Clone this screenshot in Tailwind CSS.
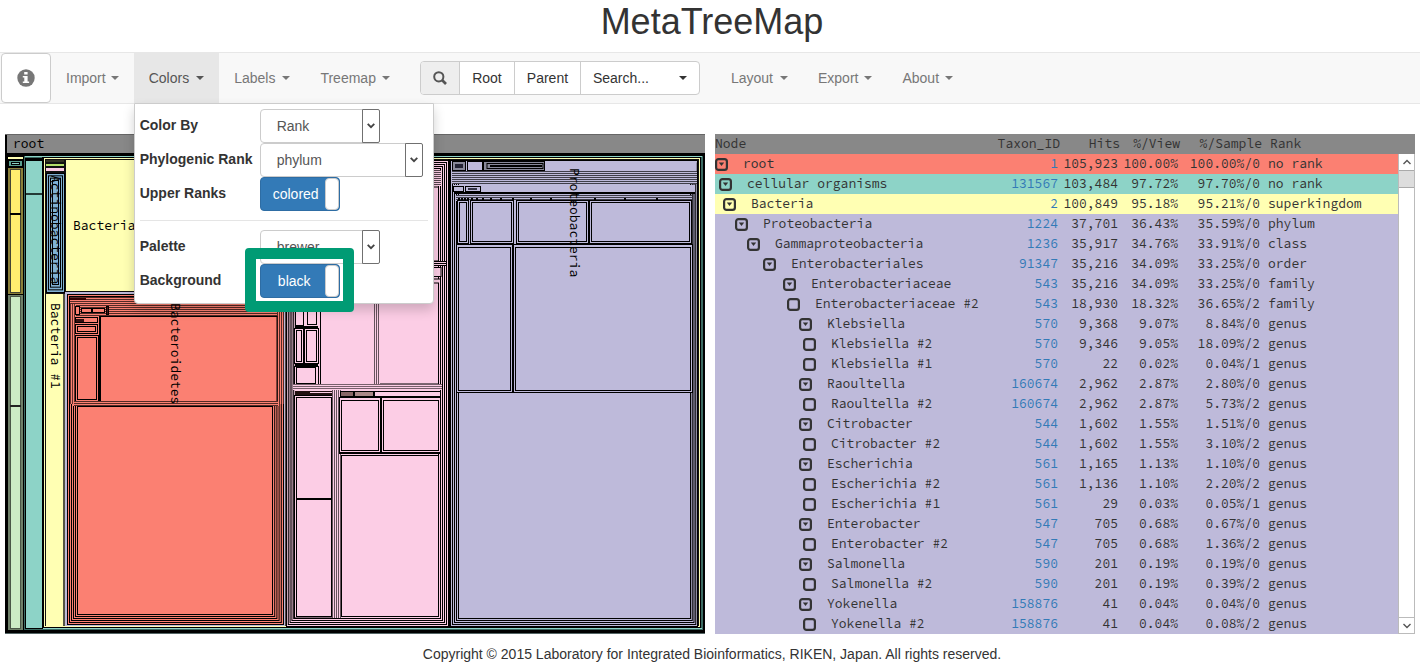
<!DOCTYPE html>
<html lang="en">
<head>
<meta charset="utf-8">
<title>MetaTreeMap</title>
<script src="https://cdn.jsdelivr.net/npm/@tailwindcss/browser@4"></script>
</head>
<body class="bg-white font-['Liberation_Sans',Arial,sans-serif] text-sm leading-5 text-[#333]">
<h1 class="h-[52px] pt-[2px] text-center text-[36px] leading-10 pl-1">MetaTreeMap</h1>

<nav class="relative flex h-[52px] items-center border-y border-[#e7e7e7] bg-[#f8f8f8] text-[#777]">
  <button aria-label="Information" class="ml-px flex h-[50px] w-[50px] items-center justify-center rounded border border-[#ccc] bg-white">
    <svg class="size-[18px]" viewBox="0 0 18 18"><circle cx="9" cy="9" r="8.7" fill="#777"/><path fill="#fff" d="M7.2 3h3.4v2.6H7.2zM5.8 7h4.8v5.4h1.5V14H5.8v-1.6h1.5V8.6H5.8z"/></svg>
  </button>
  <button class="flex h-[50px] items-center gap-[5px] px-[15px]">Import<span class="border-x-4 border-t-4 border-x-transparent border-t-[#777]"></span></button>
  <div class="relative">
    <button aria-expanded="true" class="flex h-[50px] items-center gap-[7px] bg-[#e7e7e7] px-[15px] text-[#555]">Colors<span class="border-x-4 border-t-4 border-x-transparent border-t-[#555]"></span></button>
    <div class="absolute top-[50px] left-0 z-10 w-[300px] rounded-b border border-[#ccc] bg-white px-[5px] py-[5px] shadow-[0_6px_12px_rgba(0,0,0,0.18)]">
      <div class="grid grid-cols-[120px_auto] text-[#333]">
        <label for="colorby" class="flex h-[34px] items-center pb-[3px] text-[14px] font-bold">Color By</label>
        <div class="relative w-[120px]">
          <select id="colorby" class="h-[34px] w-full appearance-none rounded border border-[#ccc] bg-white pl-4 text-[#555]"><option>Rank</option></select>
          <span class="pointer-events-none absolute inset-y-0 right-0 flex w-[18px] items-center justify-center rounded-r-xs border border-[#707070] bg-white"><svg class="h-[6px] w-2" viewBox="0 0 8 6"><path d="M.7.8 4 4.2 7.3.8" fill="none" stroke="#444" stroke-width="1.8"/></svg></span>
        </div>
        <label for="rank" class="flex h-[34px] items-center pb-[3px] font-bold whitespace-nowrap">Phylogenic Rank</label>
        <div class="relative w-[163px]">
          <select id="rank" class="h-[34px] w-full appearance-none rounded border border-[#ccc] bg-white pl-4 text-[#555]"><option>phylum</option></select>
          <span class="pointer-events-none absolute inset-y-0 right-0 flex w-[18px] items-center justify-center rounded-r-xs border border-[#707070] bg-white"><svg class="h-[6px] w-2" viewBox="0 0 8 6"><path d="M.7.8 4 4.2 7.3.8" fill="none" stroke="#444" stroke-width="1.8"/></svg></span>
        </div>
        <label for="upper" class="flex h-[34px] items-center pb-[3px] font-bold">Upper Ranks</label>
        <label class="flex h-[34px] w-20 overflow-hidden rounded border border-[#2e6da4] bg-[#337ab7] text-white">
          <input id="upper" type="checkbox" checked class="sr-only"><span class="flex flex-1 items-center justify-center pl-[6px]">colored</span><span class="w-[14px] rounded border border-[#ccc] bg-white"></span>
        </label>
      </div>
      <hr class="my-[9px] border-[#e5e5e5]">
      <div class="grid grid-cols-[120px_auto] text-[#333]">
        <label for="palette" class="flex h-[34px] items-center pb-[3px] font-bold">Palette</label>
        <div class="relative w-[120px]">
          <select id="palette" class="h-[34px] w-full appearance-none rounded border border-[#ccc] bg-white pl-4 text-[#555]"><option>brewer</option></select>
          <span class="pointer-events-none absolute inset-y-0 right-0 flex w-[18px] items-center justify-center rounded-r-xs border border-[#707070] bg-white"><svg class="h-[6px] w-2" viewBox="0 0 8 6"><path d="M.7.8 4 4.2 7.3.8" fill="none" stroke="#444" stroke-width="1.8"/></svg></span>
        </div>
        <label for="bg" class="flex h-[34px] items-center pb-[3px] font-bold">Background</label>
        <div class="relative w-20">
          <label class="flex h-[34px] w-20 overflow-hidden rounded border border-[#2e6da4] bg-[#337ab7] text-white">
            <input id="bg" type="checkbox" checked class="sr-only"><span class="flex flex-1 items-center justify-center pl-[3px]">black</span><span class="w-[14px] rounded border border-[#ccc] bg-white"></span>
          </label>
          <span class="pointer-events-none absolute -top-[16px] -right-[14px] -bottom-[14px] -left-[15px] rounded-[4px] border-[11px] border-[#009b74]"></span>
        </div>
      </div>
    </div>
  </div>
  <button class="flex h-[50px] items-center gap-[7px] px-[15px]">Labels<span class="border-x-4 border-t-4 border-x-transparent border-t-[#777]"></span></button>
  <button class="flex h-[50px] items-center gap-[6px] px-[15px]">Treemap<span class="border-x-4 border-t-4 border-x-transparent border-t-[#777]"></span></button>
  <div class="mx-[15px] flex h-[34px] w-[280px] overflow-hidden rounded border border-[#ccc] bg-white text-[#333]">
    <button aria-label="Find" class="flex w-[39px] items-center justify-center border-r border-[#ccc] bg-[#eee]"><svg class="size-[14px]" viewBox="0 0 14 14"><circle cx="5.8" cy="5.8" r="4.6" fill="none" stroke="#555" stroke-width="2"/><path d="m9 9 4 4" stroke="#555" stroke-width="2.6"/></svg></button>
    <button class="w-[55px] border-r border-[#ccc]">Root</button>
    <button class="w-[66px] border-r border-[#ccc]">Parent</button>
    <input aria-label="Search" placeholder="Search..." class="w-0 flex-1 pl-3 placeholder:text-[#333]">
    <button aria-label="Search results" class="w-9 pl-4"><span class="block w-2 border-x-4 border-t-4 border-x-transparent border-t-[#333]"></span></button>
  </div>
  <button class="ml-px flex h-[50px] items-center gap-[7px] px-[15px]">Layout<span class="border-x-4 border-t-4 border-x-transparent border-t-[#777]"></span></button>
  <button class="flex h-[50px] items-center gap-[6px] px-[15px]">Export<span class="border-x-4 border-t-4 border-x-transparent border-t-[#777]"></span></button>
  <button class="flex h-[50px] items-center gap-[6px] px-[15px]">About<span class="border-x-4 border-t-4 border-x-transparent border-t-[#777]"></span></button>
</nav>

<main class="grid grid-cols-2 gap-[10px] px-[5px] pt-[30px] font-['Source_Code_Pro','Noto_Sans_Mono_CJK_JP','Liberation_Mono',monospace] text-[13px]">
  <svg id="map" class="w-full" viewBox="5 134 700 500" role="img" aria-label="Treemap of root"></svg>
  <div class="relative">
    <table class="w-full table-fixed border-collapse leading-5">
      <colgroup><col class="w-[265px]"><col class="w-[80px]"><col class="w-[60px]"><col class="w-[60px]"><col class="w-[82px]"><col></colgroup>
      <thead class="bg-[#888]"><tr class="h-5 text-right *:p-0 *:font-normal"><th class="text-left">Node</th><th>Taxon_ID</th><th>Hits</th><th>%/View</th><th>%/Sample</th><th><span class="block pl-2 text-left">Rank</span></th></tr></thead>
      <tbody id="rows"></tbody>
    </table>
    <div class="absolute top-5 right-0 bottom-0 flex w-[17px] flex-col border-x border-[#bbb] bg-white">
      <div class="flex h-4 items-center justify-center"><svg class="h-[6px] w-2" viewBox="0 0 8 6"><path d="M.5 5 4 1.5 7.5 5" fill="none" stroke="#555" stroke-width="1.4"/></svg></div>
      <div class="h-[18px] border-y border-[#aaa] bg-[#ddd]"></div>
      <div class="flex-1"></div>
      <div class="flex h-[17px] items-center justify-center border-y border-[#bbb]"><svg class="h-[6px] w-2" viewBox="0 0 8 6"><path d="M.5 1 4 4.5 7.5 1" fill="none" stroke="#555" stroke-width="1.4"/></svg></div>
    </div>
  </div>
</main>
<footer class="py-[10px] pl-1 text-center">Copyright © 2015 Laboratory for Integrated Bioinformatics, RIKEN, Japan. All rights reserved.</footer>

<script>
const data = [
[0,1,'root','1','105,923','100.00%','100.00%/0','no rank','#fb8072'],
[4,1,'cellular organisms','131567','103,484','97.72%','97.70%/0','no rank','#8dd3c7'],
[8,1,'Bacteria','2','100,849','95.18%','95.21%/0','superkingdom','#ffffb3'],
[20,1,'Proteobacteria','1224','37,701','36.43%','35.59%/0','phylum'],
[32,1,'Gammaproteobacteria','1236','35,917','34.76%','33.91%/0','class'],
[48,1,'Enterobacteriales','91347','35,216','34.09%','33.25%/0','order'],
[68,1,'Enterobacteriaceae','543','35,216','34.09%','33.25%/0','family'],
[72,0,'Enterobacteriaceae #2','543','18,930','18.32%','36.65%/2','family'],
[84,1,'Klebsiella','570','9,368','9.07%','8.84%/0','genus'],
[88,0,'Klebsiella #2','570','9,346','9.05%','18.09%/2','genus'],
[88,0,'Klebsiella #1','570','22','0.02%','0.04%/1','genus'],
[84,1,'Raoultella','160674','2,962','2.87%','2.80%/0','genus'],
[88,0,'Raoultella #2','160674','2,962','2.87%','5.73%/2','genus'],
[84,1,'Citrobacter','544','1,602','1.55%','1.51%/0','genus'],
[88,0,'Citrobacter #2','544','1,602','1.55%','3.10%/2','genus'],
[84,1,'Escherichia','561','1,165','1.13%','1.10%/0','genus'],
[88,0,'Escherichia #2','561','1,136','1.10%','2.20%/2','genus'],
[88,0,'Escherichia #1','561','29','0.03%','0.05%/1','genus'],
[84,1,'Enterobacter','547','705','0.68%','0.67%/0','genus'],
[88,0,'Enterobacter #2','547','705','0.68%','1.36%/2','genus'],
[84,1,'Salmonella','590','201','0.19%','0.19%/0','genus'],
[88,0,'Salmonella #2','590','201','0.19%','0.39%/2','genus'],
[84,1,'Yokenella','158876','41','0.04%','0.04%/0','genus'],
[88,0,'Yokenella #2','158876','41','0.04%','0.08%/2','genus']];
document.getElementById('rows').innerHTML = data.map(d => `<tr class="h-5 text-right *:p-0" style="background:${d[8] || '#bebada'}">
<td><div class="flex h-5 items-center gap-[15px] text-left whitespace-nowrap" style="padding-left:${d[0]}px"><button aria-label="Toggle ${d[2]}" class="size-[13px] shrink-0"><svg class="size-[13px]" viewBox="0 0 13 13"><rect x="1.1" y="1.1" width="10.8" height="10.8" rx="2.4" fill="none" stroke="#333" stroke-width="2.2"/>${d[1] ? '<path d="M3.8 4.6h5.4L6.5 8z" fill="#333"/>' : ''}</svg></button><span>${d[2]}</span></div></td>
<td><a href="#" class="block pr-[2px] text-[#337ab7]">${d[3]}</a></td>
<td><span class="block pr-[2px]">${d[4]}</span></td><td><span class="block pr-[2px]">${d[5]}</span></td><td><span class="block pr-[2px]">${d[6]}</span></td><td><span class="block pl-[6px] text-left">${d[7]}</span></td></tr>`).join('');

const Y = '#ffffb3', T = '#8dd3c7', P = '#bebada', R = '#fb8072', B = '#80b1d3', G = '#ccebc5', K = '#fccde5', A = '#ffed6f';
let out = '';
const box = (x1, y1, x2, y2, f, s = '#000') => out += `<rect x="${x1}" y="${y1}" width="${x2 - x1}" height="${y2 - y1}" fill="${f}" stroke="${s}"/>`;
const fill = (x1, y1, x2, y2, f) => out += `<rect x="${x1}" y="${y1}" width="${x2 - x1}" height="${y2 - y1}" fill="${f}"/>`;
/* n outlines interpolated from an outer to an inner rectangle */
const nest = (a, b, n, f) => { for (let i = 0; i < n; i++) { const t = n > 1 ? i / (n - 1) : 0; box(...a.map((v, k) => v + (b[k] - v) * t), f); } };
/* striped strips where many rank borders run side by side */
const bandH = (x1, y1, x2, y2, f, d = '#000a') => { fill(x1, y1, x2, y2, f); for (let y = y1; y < y2; y += 2) fill(x1, y, x2, y + 1, d); };
const bandV = (x1, y1, x2, y2, f, d = '#0009') => { fill(x1, y1, x2, y2, f); for (let x = x1; x < x2; x += 2) fill(x, y1, x + 1, y2, d); };

fill(5, 134, 705, 634, '#000');
fill(7, 135, 705, 153, '#888'); fill(5, 134, 705, 135, '#666');
fill(5, 633, 705, 634, '#566');
/* unassigned and archaea columns */
fill(8, 157, 23, 159, Y); box(8.5, 160.5, 22.5, 166.5, '#5aa090'); box(11.5, 162.5, 19.5, 164.5, T);
fill(8, 168, 23, 294, '#8a7f38'); box(10.5, 169.5, 20.5, 292.5, A, '#443'); fill(10, 213, 21, 215, '#000');
fill(8, 295, 23, 630, '#6f8069'); box(10.5, 296.5, 20.5, 628.5, G, '#4a5647'); fill(10, 405, 21, 407, '#222');
/* cellular organisms */
fill(24, 156, 703, 630, '#3c6b63'); fill(25, 156, 702, 157, T); fill(25, 628, 702, 629, T);
box(25.5, 158.5, 42.5, 159.5, P); box(25.5, 160.5, 42.5, 628.5, T); fill(26, 193, 43, 195, '#243a36');
/* bacteria */
fill(42, 157, 701, 628, '#000'); fill(44, 158, 700, 627, Y); fill(45, 159, 699, 626, '#111');
fill(46, 160, 64, 162, '#332'); fill(46, 164, 64, 166, '#b3de69'); fill(46, 168, 64, 171, K);
nest([46.5, 173.5, 64.5, 292.5], [52.5, 180.5, 58.5, 284.5], 4, B);
fill(46, 294, 63, 626, Y); fill(63, 294, 65, 626, '#554');
fill(66, 160, 287, 291, Y);
/* bacteroidetes */
fill(65, 292, 286, 626, P);
nest([67.5, 294.5, 283.5, 624.5], [77.5, 304.5, 272.5, 614.5], 6, R);
fill(72, 298, 279, 406, R);
bandH(70, 297, 280, 316, R); bandV(277, 304, 284, 404, R, '#000a'); bandV(70, 304, 76, 404, R);
box(75.5, 306.5, 79.5, 314.5, R); box(81.5, 308.5, 91.5, 312.5, R); box(92.5, 308.5, 104.5, 312.5, R); box(106.5, 306.5, 108.5, 314.5, '#411'); fill(70, 298, 86, 300, '#300');
box(100.5, 316.5, 277, 402.5, R); fill(99, 316, 101, 402, '#000');
box(75.5, 317.5, 97.5, 322.5, R); fill(76, 319, 84, 322, '#311'); box(75.5, 324.5, 97.5, 333.5, R); box(77.5, 326.5, 95.5, 331.5, R);
nest([75.5, 335.5, 98.5, 401.5], [77.5, 337.5, 96.5, 399.5], 2, R);
bandH(74, 401, 278, 406, R); box(77.5, 406.5, 272.5, 614.5, R);
/* firmicutes */
fill(285, 160, 450, 626, '#544');
nest([286.5, 160.5, 448.5, 626.5], [295.5, 170.5, 438.5, 616.5], 6, K);
bandH(376, 170, 441, 186, K); box(378, 187, 438.5, 261, K); bandH(295, 261, 446, 266, K, '#000'); box(400, 267.5, 441, 276.5, K); nest([376, 279, 440.5, 386], [379.5, 283, 438.5, 384], 2, K);
fill(295, 278, 319, 384, K);
box(295.5, 290, 303.5, 325.5, K); box(307.5, 290, 316.5, 324.5, K); fill(295, 326, 318, 328, '#000');
nest([294.5, 328.5, 303.5, 363.5], [296.5, 330.5, 301.5, 361.5], 2, K); nest([304.5, 328.5, 318.5, 363.5], [306.5, 330.5, 316.5, 361.5], 2, K); fill(295, 364, 318, 366, '#000');
nest([294.5, 366.5, 318.5, 385.5], [296.5, 367.5, 315.5, 383.5], 2, K);
box(320.5, 280, 374.5, 387, K); bandV(374, 280, 380, 386, K);
bandH(293, 384, 442, 390, K, '#0008');
fill(295, 390, 440, 396, K); fill(295, 391, 334, 395, '#211'); fill(310, 392, 333, 393, K);
nest([294.5, 395.5, 336, 618], [296.5, 397.5, 331.5, 616.5], 2, K); fill(296, 498, 333, 500, '#000');
bandV(332, 390, 341, 618, K, '#0009');
fill(340, 391, 440, 398, K); box(340.5, 391.5, 353.5, 396.5, '#866'); box(354.5, 391.5, 373.5, 396.5, '#a88'); box(374.5, 391.5, 440.5, 396.5, K);
nest([339.5, 397.5, 380.5, 452.5], [341.5, 400.5, 378.5, 450.5], 2, K); nest([381.5, 397.5, 440.5, 452.5], [383.5, 400.5, 438.5, 450.5], 2, K);
fill(339, 452, 441, 454, '#000'); box(341.5, 455.5, 438.5, 616.5, K);
/* proteobacteria */
fill(448, 159, 450, 627, '#000');
nest([450.5, 160.5, 697.5, 626.5], [458.5, 170.5, 690.5, 618.5], 5, P);
fill(454, 162, 696, 171, P); box(452.5, 161.5, 465.5, 170.5, '#889'); fill(455, 164, 463, 168, '#223'); box(467.5, 161.5, 482.5, 170.5, P);
nest([483.5, 161.5, 544.5, 170.5], [490.5, 165.5, 541.5, 166.5], 3, '#889');
bandH(452, 171, 697, 184, P, '#000a');
fill(453, 185, 695, 192, P); box(453.5, 186.5, 463.5, 191.5, P); box(465.5, 186.5, 480.5, 191.5, P); fill(468, 188, 477, 190, '#334'); fill(454, 192, 695, 194, '#000');
bandH(456, 195, 692, 201, P); for (const x of [458, 461, 464, 467, 471, 476, 482, 490, 500, 512, 530, 550, 594, 624, 656]) fill(x, 198, x + 2, 200, '#000');
for (const [a, c] of [[457.5, 468.5], [470.5, 513.5], [516.5, 588.5], [589.5, 691.5]]) nest([a, 200.5, c, 243.5], [a + 2, 202.5, c - 2, 241.5], 2, P);
for (const [a, c] of [[456.5, 512.5], [513.5, 692.5]]) nest([a, 244.5, c, 392.5], [a + 2, 247.5, c - 2, 390.5], 2, P);
box(458.5, 392.5, 690.5, 618.5, P);
const label = (x, y, s, v) => out += v ? `<text transform="translate(${x} ${y}) rotate(90)">${s}</text>` : `<text x="${x}" y="${y}">${s}</text>`;
label(13, 148, 'root'); label(73, 230, 'Bacteria #2');
label(51, 175, 'Actinobacteria', 1); label(51, 303, 'Bacteria #1', 1); label(171, 303, 'Bacteroidetes', 1); label(570, 168, 'Proteobacteria', 1);
document.getElementById('map').innerHTML = `<g stroke-width="1">${out.replace(/<text.*/, '')}</g><g fill="#000" font-size="13">${out.slice(out.indexOf('<text'))}</g>`;
</script>
</body>
</html>
